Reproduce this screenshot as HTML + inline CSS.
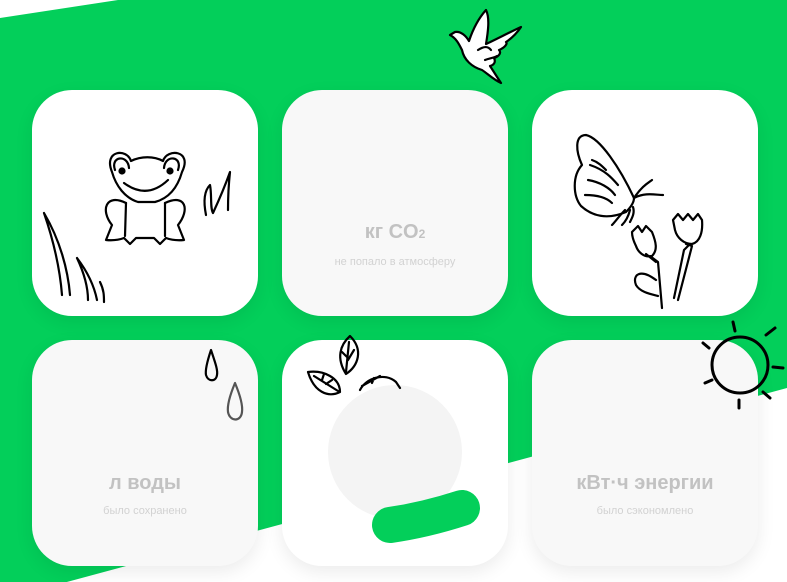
<!DOCTYPE html>
<html><head><meta charset="utf-8"><style>
body{margin:0;width:787px;height:582px;overflow:hidden;background:#fff;font-family:"Liberation Sans",sans-serif;position:relative}
.card{position:absolute;width:226px;height:226px;border-radius:40px;box-shadow:0 6px 18px rgba(0,0,0,0.08);text-align:center}
.w{background:#fff}.g{background:#f8f8f8}
.t{position:absolute;left:0;right:0;font-weight:bold;font-size:20px;color:#c2c2c2}
.s{position:absolute;left:0;right:0;font-size:11px;color:#d2d2d2}
svg{position:absolute;left:0;top:0}
</style></head><body>
<svg width="787" height="582"><polygon points="0,18 118,0 787,0 787,388 0,600" fill="#03cf5a"/></svg>
<div class="card w" style="left:32px;top:90px"></div>
<div class="card g" style="left:282px;top:90px"><div class="t" style="top:131px">кг CO<span style="font-size:12px">2</span></div><div class="s" style="top:166px">не попало в атмосферу</div></div>
<div class="card w" style="left:532px;top:90px"></div>
<div class="card g" style="left:32px;top:340px"><div class="t" style="top:132px">л воды</div><div class="s" style="top:165px">было сохранено</div></div>
<div class="card w" style="left:282px;top:340px"></div>
<div class="card g" style="left:532px;top:340px"><div class="t" style="top:132px">кВт·ч энергии</div><div class="s" style="top:165px">было сэкономлено</div></div>
<svg width="787" height="582" fill="none" stroke="#000" stroke-width="2.2" stroke-linecap="round" stroke-linejoin="round">
<circle cx="395" cy="452" r="67" fill="#f4f4f4" stroke="none"/>
<path d="M390,525 Q425,520 462,508" stroke="#03cf5a" stroke-width="36"/>
<!-- frog -->
<path d="M112,172 C103,150 127,148 131,161 C141,156 154,156 163,161 C167,148 193,150 182,172 C178,186 170,198 155,202 L138,202 C125,198 116,186 112,172 Z"/>
<path d="M115,170 C110,156 128,154 129,168 M178,170 C183,156 165,154 164,168"/>
<circle cx="122" cy="171" r="2.5" fill="#000"/><circle cx="170" cy="171" r="2.5" fill="#000"/>
<path d="M124,183 Q147,200 168,180"/>
<path d="M126,203 L125,236 M165,203 L165,236"/>
<path d="M126,203 C106,193 100,210 112,225 L106,240 Q116,241 124,238 M165,203 C186,193 190,210 178,225 L184,240 Q174,241 166,238"/>
<path d="M124,238 L130,244 L136,238 L154,238 L160,244 L166,238"/>
<path d="M44,213 C60,240 68,270 70,295 M44,213 C55,245 60,270 62,295 M77,258 C90,275 95,290 97,300 M77,258 C85,275 88,290 88,300 M100,282 C104,290 104,296 104,302"/>
<path d="M206,215 C203,200 205,190 210,185 C212,195 210,208 213,213 C219,200 225,186 230,172 C228,190 228,200 228,210"/>
<!-- butterfly -->
<path d="M634,198 C620,168 600,138 586,135 C574,135 576,152 582,165 C572,176 573,196 581,206 C592,216 607,220 626,212 C631,207 634,202 634,198 Z"/>
<path d="M590,165 C605,170 612,178 618,185 M588,180 C600,182 610,188 615,195 M585,195 C598,195 607,198 612,203 M592,160 C598,162 602,166 606,170"/>
<path d="M634,198 C642,186 648,183 652,180 M634,198 C645,192 656,195 663,195 M625,210 C620,215 615,222 612,225 M630,210 C628,218 625,222 622,225 M633,207 C635,213 632,218 630,222"/>
<path d="M632,232 L638,226 L642,232 L646,226 L652,232 C656,242 658,250 652,256 C644,258 638,252 636,246 C633,240 632,236 632,232 Z M650,256 L658,262 L662,308 M646,254 L656,262"/>
<path d="M673,220 L678,214 L683,220 L688,214 L693,220 L698,214 L702,220 C703,232 700,242 692,244 C684,244 677,238 675,230 Z M686,244 L692,246 L678,300 M688,246 L684,250 L674,298"/>
<path d="M656,280 C640,268 632,275 636,285 C640,292 650,294 658,296"/>
<!-- bird -->
<path d="M450,35 L455,32 C461,31 466,36 469,41 C472,32 477,20 486,10 C490,18 488,32 486,44 C495,40 508,33 521,27 C517,33 512,38 506,42 C508,44 504,48 499,50 C502,53 498,57 494,58 C496,62 494,65 490,66 C494,72 497,77 501,83 C494,80 488,74 482,70 C472,67 464,60 462,50 C459,44 456,38 450,35 Z" fill="#fff"/>
<path d="M478,50 C484,46 488,46 491,50 M485,60 C490,58 494,58 497,56"/>
<!-- drops -->
<path d="M211,350 C207,362 205,370 206,375 C208,382 216,382 217,375 C218,370 215,362 211,350 Z"/>
<path d="M235,383 C230,395 227,405 228,412 C230,422 241,422 242,412 C243,405 240,395 235,383 Z" stroke="#555"/>
<!-- leaves -->
<path d="M350,336 C340,345 336,358 346,374 C358,366 364,350 350,336 Z M349,342 L346,372 M342,352 L348,358 M354,350 L348,360"/>
<path d="M308,372 C314,392 328,398 340,392 C340,378 324,370 308,372 Z M314,376 L338,391 M322,380 L324,374 M326,384 L332,380"/>
<path d="M360,390 C366,378 385,372 396,382 L400,388 M362,386 L380,376 M372,383 L374,378"/>
<!-- sun -->
<circle cx="740" cy="365" r="28" stroke-width="3"/>
<path stroke-width="3" d="M733,322 L735,331 M766,335 L775,328 M773,367 L783,368 M763,392 L770,398 M739,400 L739,408 M705,383 L712,380 M703,343 L709,348"/>
</svg>
</body></html>
